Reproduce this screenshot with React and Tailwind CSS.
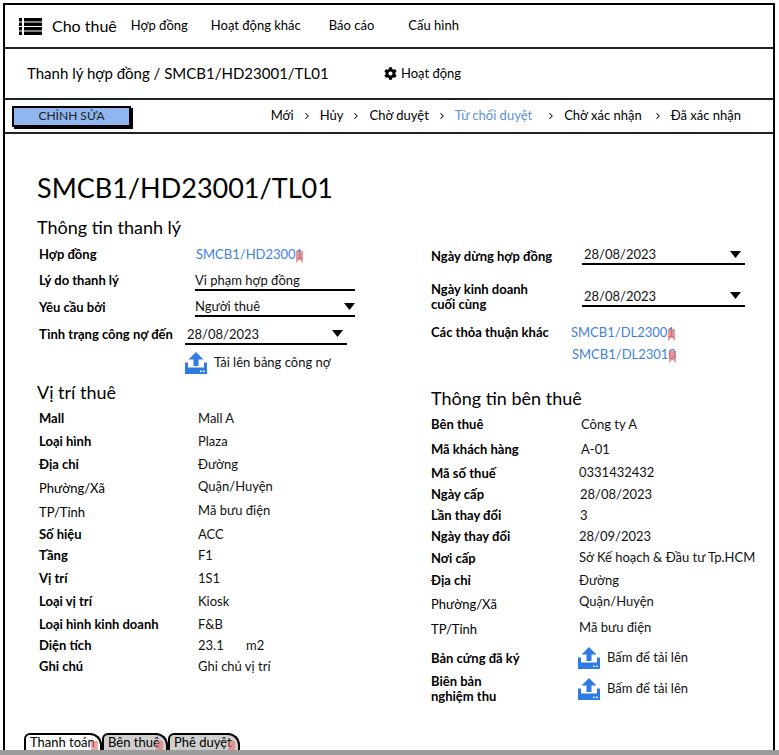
import React from 'react';
import { FaCog } from 'react-icons/fa';
import { ChevronRight } from 'lucide-react';

const font = { fontFamily: 'Lato, "Noto Sans", sans-serif' };

const Hamburger = () => (
  <svg width="23" height="17" viewBox="0 0 23 17">
    {[0, 4.5, 9, 13.5].map((y) => (
      <g key={y}>
        <rect x="0" y={y} width="3" height="3.5" fill="#000" />
        <rect x="5" y={y} width="18" height="3.5" fill="#000" />
      </g>
    ))}
  </svg>
);

const UploadIcon = () => (
  <svg width="22" height="22" viewBox="0 0 22 22">
    <path d="M11 0 L18.5 7.5 H13.5 V14 H8.5 V7.5 H3.5 Z" fill="#2f7be5" />
    <path d="M0 10.5 H3 V15.5 H19 V10.5 H22 V22 H0 Z" fill="#2f7be5" />
    <rect x="15" y="18.5" width="1.6" height="1.6" fill="#fff" />
    <rect x="18" y="18.5" width="1.6" height="1.6" fill="#fff" />
  </svg>
);

const Caret = () => (
  <svg width="11" height="7" viewBox="0 0 11 7">
    <path d="M0 0 H11 L5.5 7 Z" fill="#000" />
  </svg>
);

const Flag = () => (
  <svg width="7" height="12" viewBox="0 0 7 12" className="-ml-[7px] mt-[4px] opacity-70">
    <path d="M0 0 H7 V12 L3.5 8.5 L0 12 Z" fill="#e46b6b" />
  </svg>
);

const Link = ({ children }) => (
  <span className="inline-flex items-center text-[13px] text-[#3f7fe0]">
    {children}
    <Flag />
  </span>
);

const Field = ({ children, w, caret, className = '' }) => (
  <div className={`flex items-center justify-between border-b-2 border-black pb-[1px] ${w} ${className}`}>
    <span className="text-[13px] leading-[16px] text-[#111]">{children}</span>
    {caret && <Caret />}
  </div>
);

const LRow = ({ h, label, normal, children }) => (
  <div className={`flex items-center ${h}`}>
    <span className={`w-[159px] pl-[2px] text-[13px] text-black ${normal ? '' : 'font-bold'}`}>{label}</span>
    <div className="flex items-center text-[13px] text-[#111]">{children}</div>
  </div>
);

const RRow = ({ h, label, normal, children }) => (
  <div className={`flex items-center ${h}`}>
    <span className={`w-[150px] text-[13px] text-black leading-[15px] ${normal ? '' : 'font-bold'}`}>{label}</span>
    <div className="flex items-center text-[13px] text-[#111]">{children}</div>
  </div>
);

const Upload = ({ text }) => (
  <div className="flex items-center">
    <UploadIcon />
    <span className="ml-[7px] text-[13px] text-[#111]">{text}</span>
  </div>
);

const Tab = ({ children, w, active }) => (
  <div
    className={`h-[24px] border-2 border-b-0 border-black rounded-tl-[6px] rounded-tr-[12px] pl-[4px] text-[13px] leading-[15px] text-black ${w} ${active ? 'bg-white' : 'bg-[#cfcfcf]'}`}
  >
    <span className="relative">
      {children}
      <span className="absolute -right-[3px] top-[7px] h-[10px] w-[7px] bg-[#e46b6b] opacity-60" />
    </span>
  </div>
);

const Sep = () => <ChevronRight size={10} strokeWidth={2.5} className="text-black" />;

export default function App() {
  return (
    <div className="w-[779px] h-[755px] overflow-hidden bg-white flex flex-col" style={font}>
      <div className="pl-[3px] pt-[3px]">
        <div className="w-[772px] h-[747px] border-2 border-b-0 border-black flex flex-col overflow-hidden">
          {/* top nav */}
          <div className="h-[44px] border-b-2 border-[#222] flex items-center pl-[14px]">
            <Hamburger />
            <span className="ml-[10px] text-[16px] text-black">Cho thuê</span>
            <span className="ml-[14px] text-[13px] text-black">Hợp đồng</span>
            <span className="ml-[23px] text-[13px] text-black">Hoạt động khác</span>
            <span className="ml-[28px] text-[13px] text-black">Báo cáo</span>
            <span className="ml-[34px] text-[13px] text-black">Cấu hình</span>
          </div>

          {/* title bar */}
          <div className="h-[51px] border-b-2 border-[#222] flex items-center pl-[22px]">
            <span className="w-[357px] text-[15px] text-black">Thanh lý hợp đồng / SMCB1/HD23001/TL01</span>
            <FaCog className="text-[13px] text-black" />
            <span className="ml-[4px] text-[13px] text-black">Hoạt động</span>
          </div>

          {/* action bar */}
          <div className="h-[34px] border-b-2 border-[#222] flex items-center justify-between pl-[7px] pr-[32px]">
            <button className="w-[119px] h-[21px] bg-[#8fb6ef] border-2 border-black shadow-[2px_2px_0_#000] text-[12px] text-[#222] leading-none">
              CHỈNH SỬA
            </button>
            <div className="flex items-center gap-[8px] text-[13px] text-black">
              <span>Mới</span>
              <Sep />
              <span>Hủy</span>
              <Sep />
              <span>Chờ duyệt</span>
              <Sep />
              <span className="text-[#5b8fe0]">Từ chối duyệt</span>
              <span className="ml-[6px] flex"><Sep /></span>
              <span>Chờ xác nhận</span>
              <span className="ml-[3px] flex"><Sep /></span>
              <span>Đã xác nhận</span>
            </div>
          </div>

          {/* content */}
          <div className="flex-1 flex flex-col pl-[32px]">
            <h1 className="mt-[38px] h-[32px] flex items-center text-[27px] text-black">SMCB1/HD23001/TL01</h1>
            <div className="mt-[10px] flex">
              {/* left column */}
              <div className="w-[394px] flex flex-col">
                <h2 className="h-[27px] flex items-center text-[18px] text-black">Thông tin thanh lý</h2>
                <LRow h="h-[27px]" label="Hợp đồng"><Link>SMCB1/HD23001</Link></LRow>
                <LRow h="h-[26px]" label="Lý do thanh lý">
                  <Field w="w-[160px]" className="-ml-[1px] mt-[1px]">Vi phạm hợp đồng</Field>
                </LRow>
                <LRow h="h-[27px]" label="Yêu cầu bởi">
                  <Field w="w-[160px]" className="-ml-[1px]" caret>Người thuê</Field>
                </LRow>
                <LRow h="h-[28px]" label="Tình trạng công nợ đến">
                  <Field w="w-[162px]" className="-ml-[11px] pl-[2px] pr-[4px]" caret>28/08/2023</Field>
                </LRow>
                <div className="h-[28px] flex items-center pl-[148px]">
                  <Upload text="Tải lên bảng công nợ" />
                </div>
                <h2 className="h-[30px] flex items-center text-[18px] text-black">Vị trí thuê</h2>
                <LRow h="h-[24px]" label="Mall"><span className="ml-[2px]">Mall A</span></LRow>
                <LRow h="h-[22px]" label="Loại hình"><span className="ml-[2px]">Plaza</span></LRow>
                <LRow h="h-[24px]" label="Địa chỉ"><span className="ml-[2px]">Đường</span></LRow>
                <LRow h="h-[24px]" label="Phường/Xã" normal><span className="ml-[2px] -mt-[4px]">Quận/Huyện</span></LRow>
                <LRow h="h-[23px]" label="TP/Tỉnh" normal><span className="ml-[2px] -mt-[4px]">Mã bưu điện</span></LRow>
                <LRow h="h-[21px]" label="Số hiệu"><span className="ml-[2px]">ACC</span></LRow>
                <LRow h="h-[22px]" label="Tầng"><span className="ml-[2px]">F1</span></LRow>
                <LRow h="h-[23px]" label="Vị trí"><span className="ml-[2px]">1S1</span></LRow>
                <LRow h="h-[24px]" label="Loại vị trí"><span className="ml-[2px]">Kiosk</span></LRow>
                <LRow h="h-[21px]" label="Loại hình kinh doanh"><span className="ml-[2px]">F&amp;B</span></LRow>
                <LRow h="h-[21px]" label="Diện tích">
                  <span className="ml-[2px] w-[48px]">23.1</span>
                  <span>m2</span>
                </LRow>
                <LRow h="h-[22px]" label="Ghi chú"><span className="ml-[2px]">Ghi chú vị trí</span></LRow>
              </div>

              {/* right column */}
              <div className="w-[330px] flex flex-col pt-[27px]">
                <RRow h="h-[31px]" label="Ngày dừng hợp đồng">
                  <Field w="w-[163px]" className="ml-[1px] -mt-[2px] pl-[2px] pr-[4px]" caret>28/08/2023</Field>
                </RRow>
                <RRow h="h-[50px]" label={<>Ngày kinh doanh<br />cuối cùng</>}>
                  <Field w="w-[163px]" className="ml-[1px] pl-[2px] pr-[4px]" caret>28/08/2023</Field>
                </RRow>
                <div className="h-[44px] flex items-start">
                  <span className="w-[140px] h-[22px] flex items-center text-[13px] font-bold text-black">Các thỏa thuận khác</span>
                  <div className="flex flex-col">
                    <div className="h-[22px] flex items-center"><Link>SMCB1/DL23001</Link></div>
                    <div className="h-[22px] flex items-center ml-[1px]"><Link>SMCB1/DL23010</Link></div>
                  </div>
                </div>
                <h2 className="h-[46px] pt-[18px] flex items-center text-[18px] text-black">Thông tin bên thuê</h2>
                <RRow h="h-[25px]" label="Bên thuê">Công ty A</RRow>
                <RRow h="h-[25px]" label="Mã khách hàng">A-01</RRow>
                <RRow h="h-[22px]" label="Mã số thuế"><span className="-ml-[2px]">0331432432</span></RRow>
                <RRow h="h-[21px]" label="Ngày cấp"><span className="-ml-[1px]">28/08/2023</span></RRow>
                <RRow h="h-[21px]" label="Lần thay đổi"><span className="-ml-[1px]">3</span></RRow>
                <RRow h="h-[21px]" label="Ngày thay đổi"><span className="-ml-[2px]">28/09/2023</span></RRow>
                <RRow h="h-[22px]" label="Nơi cấp"><span className="-ml-[2px]">Sở Kế hoạch &amp; Đầu tư Tp.HCM</span></RRow>
                <RRow h="h-[23px]" label="Địa chỉ"><span className="-ml-[2px]">Đường</span></RRow>
                <RRow h="h-[24px]" label="Phường/Xã" normal><span className="-ml-[2px] -mt-[4px]">Quận/Huyện</span></RRow>
                <RRow h="h-[27px]" label="TP/Tỉnh" normal><span className="-ml-[2px] -mt-[4px]">Mã bưu điện</span></RRow>
                <RRow h="h-[30px]" label="Bản cứng đã ký">
                  <div className="-ml-[3px]"><Upload text="Bấm để tải lên" /></div>
                </RRow>
                <RRow h="h-[32px]" label={<>Biên bản<br />nghiệm thu</>}>
                  <div className="-ml-[3px]"><Upload text="Bấm để tải lên" /></div>
                </RRow>
              </div>
            </div>

            {/* bottom tabs */}
            <div className="mt-auto flex items-end -ml-[13px] -mb-[7px]">
              <Tab w="w-[78px]" active>Thanh toán</Tab>
              <Tab w="w-[66px]">Bên thuê</Tab>
              <Tab w="w-[72px]">Phê duyệt</Tab>
            </div>
          </div>
        </div>
      </div>
      <div className="h-[5px] w-full bg-[#9b9b9b]" />
    </div>
  );
}
